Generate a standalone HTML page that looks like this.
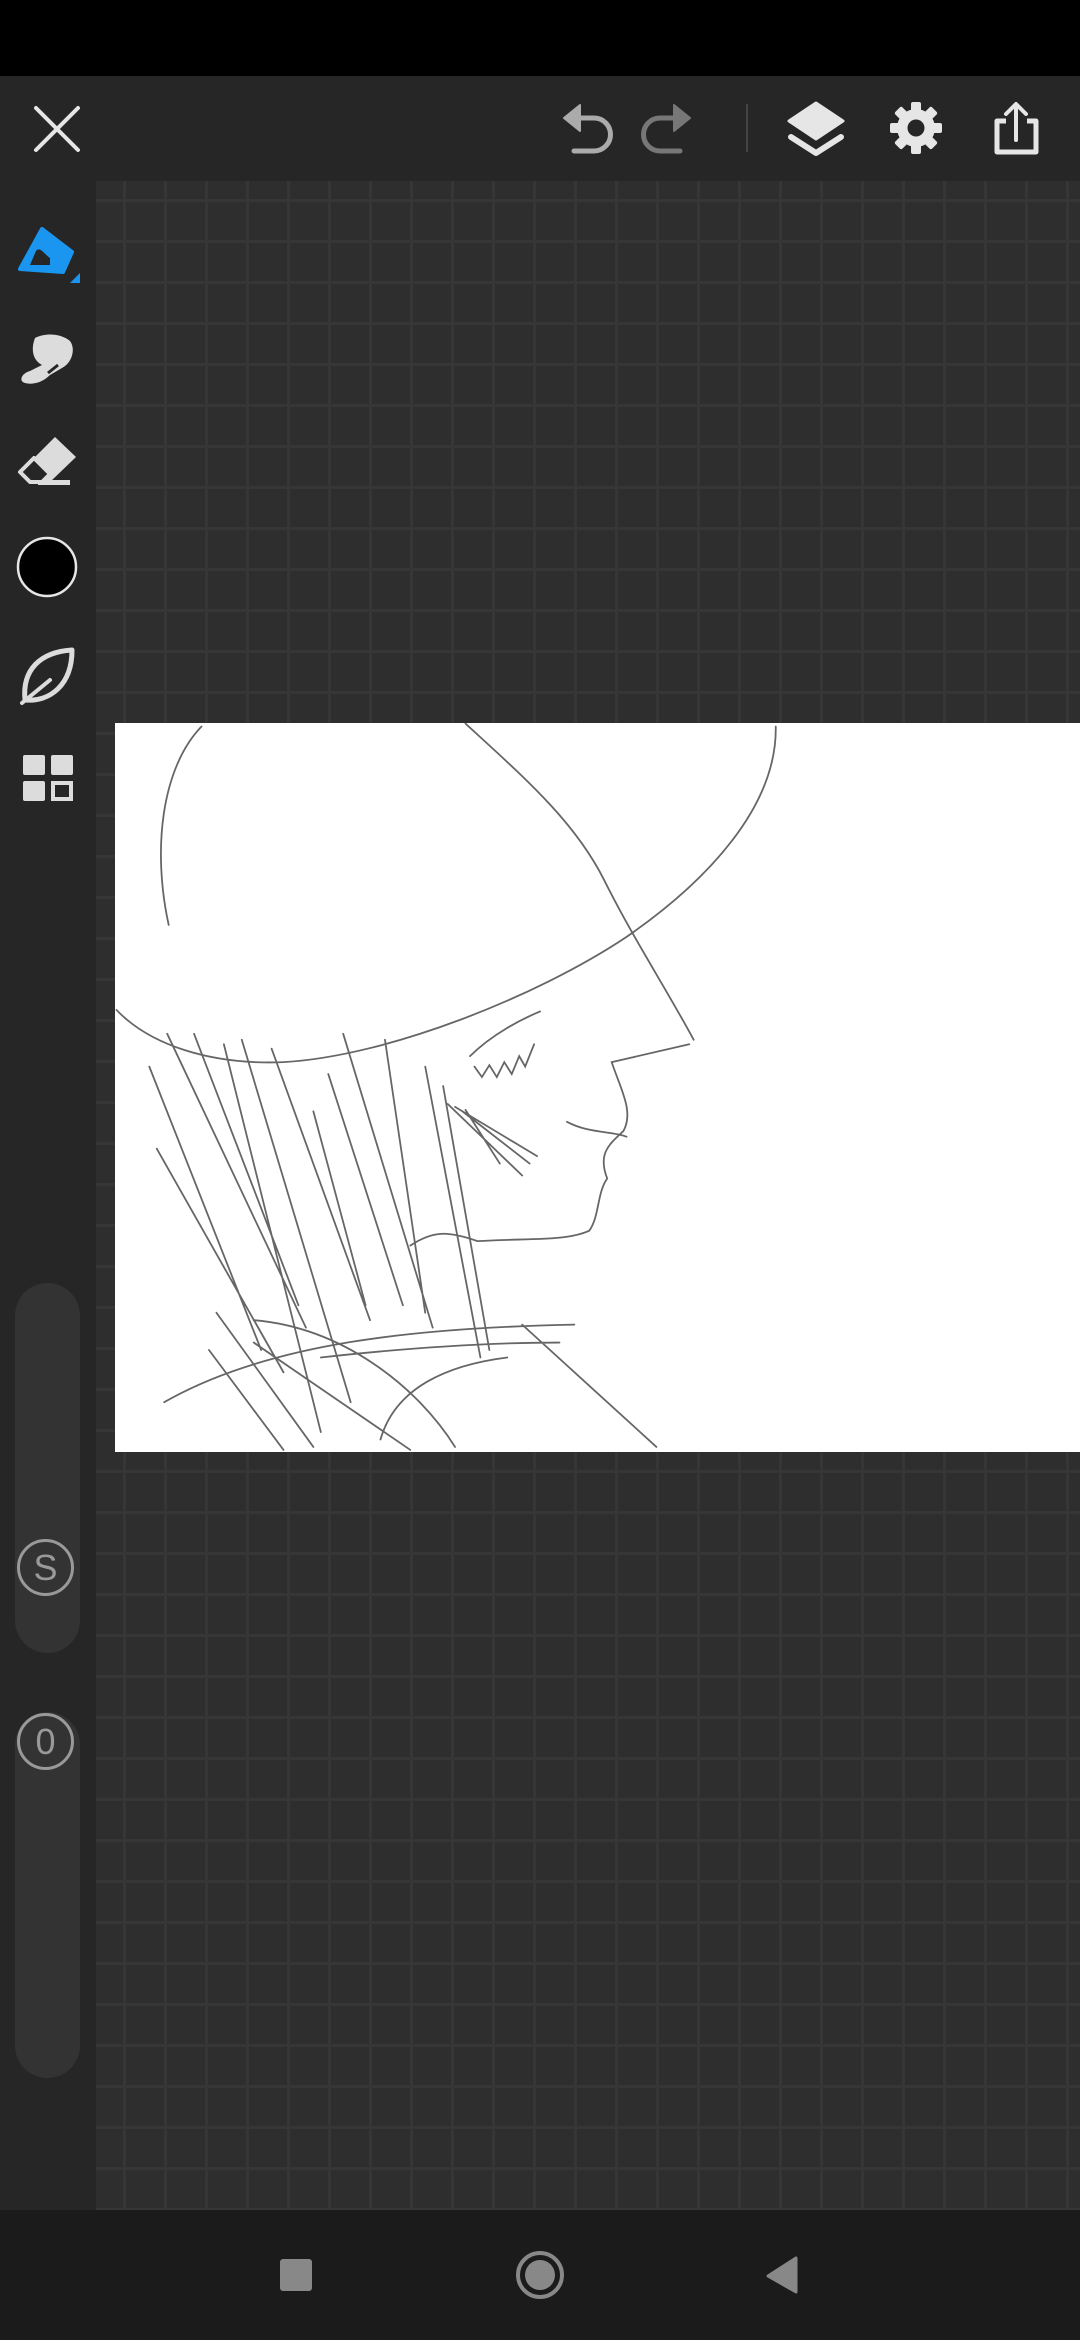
<!DOCTYPE html>
<html><head><meta charset="utf-8"><style>
*{margin:0;padding:0}
html,body{width:1080px;height:2340px;overflow:hidden;background:#262626;font-family:"Liberation Sans",sans-serif}
#status{position:absolute;left:0;top:0;width:1080px;height:76px;background:#000}
#top{position:absolute;left:0;top:76px;width:1080px;height:105px;background:#262626}
#grid{position:absolute;left:96px;top:181px;width:984px;height:2029px;background-color:#2e2e2e;
background-image:linear-gradient(to right,#363636 0,#363636 3px,transparent 3px),linear-gradient(to bottom,#363636 0,#363636 3px,transparent 3px);
background-size:41px 41px;background-position:27px 18px}
#side{position:absolute;left:0;top:181px;width:96px;height:2029px;background:#262626}
#nav{position:absolute;left:0;top:2210px;width:1080px;height:130px;background:#1b1b1b}
#paper{position:absolute;left:115px;top:723px;width:965px;height:729px;background:#fff;overflow:hidden}
.pill{position:absolute;left:15px;width:65px;background:#333;border-radius:33px}
.circ{position:absolute;left:17px;width:57px;height:57px;border:3px solid #999;border-radius:50%;box-sizing:border-box;color:#999;font-size:36px;text-align:center;line-height:51px;background:#333}
svg{position:absolute;left:0;top:0}
</style></head><body>
<div id="status"></div>
<div id="top"></div>
<div id="grid"></div>
<div id="side"></div>
<div class="pill" style="top:1283px;height:370px"></div>
<div class="pill" style="top:1712px;height:366px"></div>
<div class="circ" style="top:1539px">S</div>
<div class="circ" style="top:1713px">0</div>
<div id="paper">
<svg width="965" height="729" viewBox="77 485 647 488" fill="none" stroke="#666" stroke-width="1.2" stroke-linecap="round">
<path d="M113,620 C102,570 108,515 135,487"/>
<path d="M520,487 C521,540 475,590 420,628 C360,668 260,708 190,712 C140,714 100,700 78,677"/>
<path d="M312,485 C350,520 385,550 405,590 C425,630 445,660 465,697"/>
<path d="M462,700 L410,712 C416,730 425,745 418,758 C410,766 400,772 407,790 C400,800 402,815 395,825 C380,832 355,830 320,832 C300,825 290,825 275,835"/>
<path d="M380,752 C395,760 410,758 420,762"/>
<path d="M315,708 C330,693 350,683 362,678 M318,715 L323,722 L328,714 L333,722 L338,712 L343,720 L348,708 L352,715 L358,700"/>
<path d="M300,740 L350,788 M305,742 L360,775 M310,745 L355,780 M312,744 L335,780"/>
<path d="M100,715 L175,905 M112,693 L205,890 M130,693 L200,875 M162,697 L235,940 M182,703 L248,885 M210,745 L245,875 M230,693 L290,890 M258,697 L285,880 M285,715 L322,910 M297,728 L328,905 M105,770 L190,920 M150,700 L215,960 M220,720 L270,875"/>
<path d="M110,940 C180,900 280,890 385,888 M215,910 C260,905 320,900 375,900 M350,888 L440,970 M145,880 L210,970 M255,965 C265,930 300,915 340,910 M170,885 C230,890 280,930 305,970 M170,900 L275,972 M140,905 L190,972"/>
</svg>
</div>
<div id="nav"></div>
<svg width="1080" height="2340" viewBox="0 0 1080 2340">
<path d="M36,108 L78,150 M78,108 L36,150" stroke="#e6e6e6" stroke-width="4" stroke-linecap="round"/>
<!-- undo -->
<path d="M577,118 H594 A16.5,16.5 0 0 1 594,151 H574" stroke="#ababab" stroke-width="5" fill="none" stroke-linecap="round"/>
<path d="M564,118 L580,105 V131 Z" fill="#ababab" stroke="#ababab" stroke-width="2" stroke-linejoin="round"/>
<!-- redo -->
<path d="M677,118 H660 A16.5,16.5 0 0 0 660,151 H680" stroke="#777" stroke-width="5" fill="none" stroke-linecap="round"/>
<path d="M690,118 L674,105 V131 Z" fill="#777" stroke="#777" stroke-width="2" stroke-linejoin="round"/>
<rect x="746" y="104" width="2" height="48" fill="#444"/>
<!-- layers -->
<path d="M816,103 L843,121 L816,139 L789,121 Z" fill="#e6e6e6" stroke="#e6e6e6" stroke-width="3" stroke-linejoin="round"/>
<path d="M791,137 L816,153 L841,137" stroke="#e6e6e6" stroke-width="6" fill="none" stroke-linejoin="round" stroke-linecap="round"/>
<!-- gear -->
<g transform="translate(916,128)" fill="#e6e6e6">
<circle r="19"/>
<g id="t"><rect x="-5" y="-26" width="10" height="12" rx="2"/></g>
<use href="#t" transform="rotate(45)"/><use href="#t" transform="rotate(90)"/><use href="#t" transform="rotate(135)"/><use href="#t" transform="rotate(180)"/><use href="#t" transform="rotate(225)"/><use href="#t" transform="rotate(270)"/><use href="#t" transform="rotate(315)"/>
<circle r="8.5" fill="#262626"/>
</g>
<!-- share -->
<path d="M1006,121 H997 V152 H1036 V121 H1027" stroke="#e6e6e6" stroke-width="5" fill="none" stroke-linejoin="round"/>
<path d="M1016,140 V106 M1006,114 L1016,104 L1026,114" stroke="#e6e6e6" stroke-width="4" fill="none" stroke-linecap="round" stroke-linejoin="round"/>
<!-- pen -->
<g transform="translate(0,14)">
<path d="M42,215 L72,238 L63,258 L20,255 Z" fill="#1a95f0" stroke="#1a95f0" stroke-width="4" stroke-linejoin="round"/>
<path d="M30,251 L36,237 C40,232 44,240 50,244 L50,251 Z" fill="#262626"/>
</g>
<path d="M70,283 L80,273 V283 Z" fill="#1a95f0"/>
<!-- smudge -->
<g transform="translate(0,33)">
<path d="M35,305 C45,300 60,300 70,308 C76,316 72,330 62,335 L50,342 C42,350 32,352 25,350 C18,348 22,340 30,338 L42,332 C34,328 30,318 35,305 Z" fill="#dcdcdc"/>
<path d="M48,340 L58,332" stroke="#262626" stroke-width="3"/>
</g>
<!-- eraser -->
<g transform="translate(0,12)">
<path d="M55,425 L76,445 L50,470 L30,470 L20,460 Z" fill="#dcdcdc"/>
<path d="M20,460 L34,446 L50,462 L42,470 L30,470 Z" fill="#262626" stroke="#dcdcdc" stroke-width="4" stroke-linejoin="round"/>
<rect x="38" y="468" width="32" height="5" fill="#dcdcdc"/>
</g>
<circle cx="47" cy="567" r="29" fill="#000" stroke="#e6e6e6" stroke-width="2.5"/>
<!-- leaf -->
<path d="M72,650 C40,652 22,670 25,700 C50,702 72,685 72,650 Z" stroke="#dcdcdc" stroke-width="5" fill="none" stroke-linejoin="round"/>
<path d="M22,703 L50,680" stroke="#dcdcdc" stroke-width="4" stroke-linecap="round"/>
<!-- grid icon -->
<rect x="23" y="755" width="22" height="20" rx="2" fill="#dcdcdc"/>
<rect x="51" y="755" width="22" height="20" rx="2" fill="#dcdcdc"/>
<rect x="23" y="781" width="22" height="20" rx="2" fill="#dcdcdc"/>
<rect x="53" y="783" width="18" height="16" fill="none" stroke="#dcdcdc" stroke-width="4"/>
<!-- nav -->
<rect x="280" y="2259" width="32" height="32" rx="3" fill="#888"/>
<circle cx="540" cy="2275" r="22" fill="none" stroke="#888" stroke-width="4"/>
<circle cx="540" cy="2275" r="15" fill="#888"/>
<path d="M796,2258 V2292 L768,2276 Z" fill="#888" stroke="#888" stroke-width="3" stroke-linejoin="round"/>
</svg>
</body></html>
